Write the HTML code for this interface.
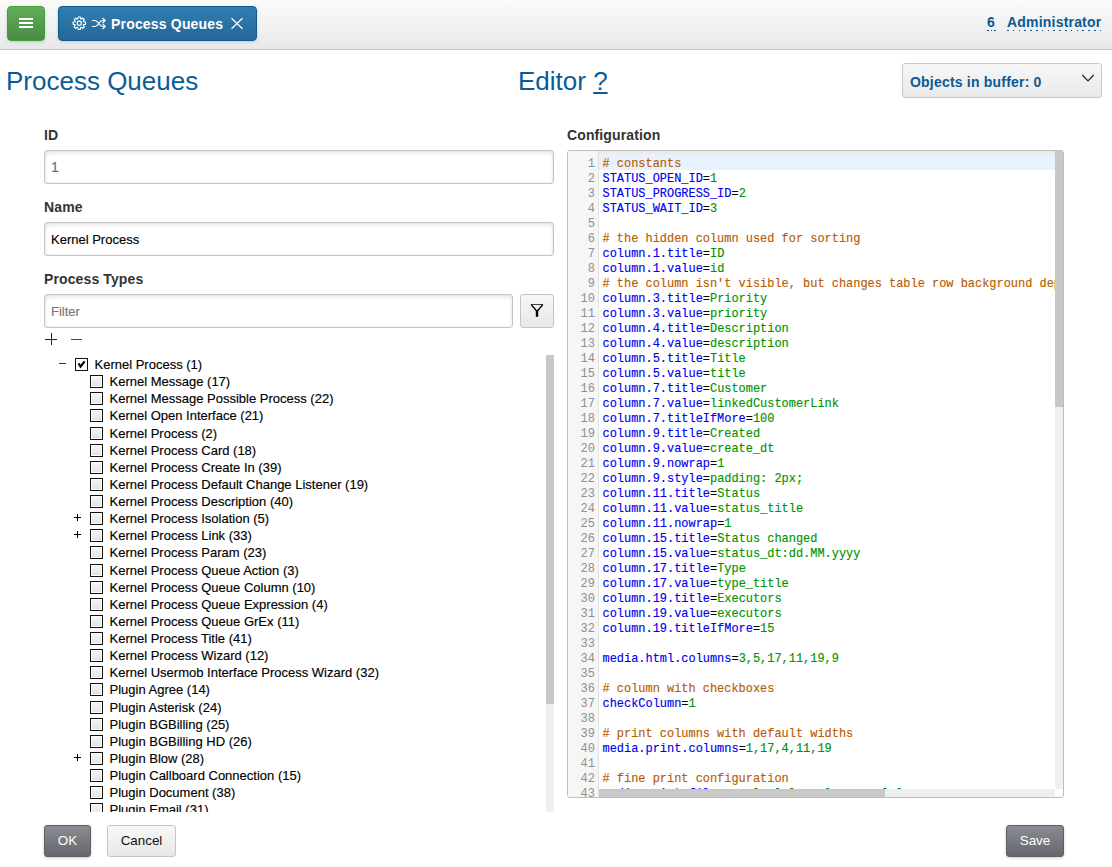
<!DOCTYPE html>
<html><head><meta charset="utf-8">
<style>
*{box-sizing:border-box}
html,body{margin:0;padding:0;background:#fff;width:1112px;height:867px;overflow:hidden;font-family:"Liberation Sans",sans-serif}
.a{position:absolute}
.hdr{left:0;top:0;width:1112px;height:50px;background:linear-gradient(#fbfbfb,#e8e8e8);border-bottom:1px solid #c4c4c4}
.gbtn{left:7px;top:6px;width:38px;height:35px;border:1px solid #40a034;border-radius:4px;background:linear-gradient(#62ad58,#4a8b45);box-shadow:0 1px 3px rgba(0,0,0,.15)}
.gbtn i{position:absolute;left:11px;width:14px;height:2px;background:#fff}
.tab{left:58px;top:6px;width:199px;height:35px;border:1px solid #0d5a90;border-radius:4px;background:linear-gradient(#2f7db2,#246898);box-shadow:0 1px 3px rgba(0,0,0,.15)}
.tabt{left:111px;top:16px;letter-spacing:0.18px;font-weight:bold;font-size:14px;color:#fff;line-height:16px;white-space:nowrap}
.lnk{font-weight:bold;font-size:14px;color:#0b5a94;line-height:16px;white-space:nowrap;letter-spacing:0.2px}
.dot{height:1px;background:repeating-linear-gradient(to right,#0b5a94 0 1.6px,transparent 1.6px 5.8px)}
.h1{font-size:26px;color:#0b5c96;line-height:30px;white-space:nowrap}
.dd{left:902px;top:63px;width:200px;height:35px;border:1px solid #c8c8c8;border-radius:3px;background:linear-gradient(#f7f7f7,#e9e9e9)}
.lbl{font-weight:bold;font-size:14px;color:#333;line-height:16px;white-space:nowrap;letter-spacing:0.12px}
.inp{border:1px solid #c4c4c4;border-radius:3px;background:#fff;box-shadow:inset 0 2px 4px rgba(0,0,0,.1),inset 0 0 3px rgba(0,0,0,.05)}
.itx{font-size:13px;line-height:16px;white-space:nowrap;-webkit-text-stroke:0.15px}
.fbtn{left:520px;top:294px;width:34px;height:34px;border:1px solid #c4c4c4;border-radius:3px;background:linear-gradient(#f6f6f6,#e8e8e8)}
.tree{left:44px;top:355px;width:510px;height:457px;overflow:hidden}
.tr{position:absolute;left:0;width:500px;height:17px}
.cb{position:absolute;top:0;width:13px;height:13px;border:1px solid #111;background:linear-gradient(#f6f6f6,#e2e2e2);box-shadow:inset 0 0 0 1px #fff}
.cb.ck{background:#fff;box-shadow:none}
.cb svg{position:absolute;left:0;top:0}
.tt{position:absolute;top:-1px;font-size:13px;line-height:15px;color:#000;white-space:nowrap;-webkit-text-stroke:0.15px}
.tg{position:absolute}
.tg.mi{top:5px;width:7px;height:1px;background:#333}
.tg.pl{top:1px;width:7px;height:9px}
.tg.pl:before{content:"";position:absolute;left:0;top:4px;width:7px;height:1px;background:#000}
.tg.pl:after{content:"";position:absolute;left:3px;top:1px;width:1px;height:7px;background:#000}
.vsb{left:502px;top:0;width:8px;height:457px;background:#efefef}
.vsb i{position:absolute;left:0;top:0;width:8px;height:349px;background:#c8c8c8}
.ed{left:567px;top:150px;width:497px;height:648px;border:1px solid #bdbdbd;border-radius:3px;overflow:hidden;background:#fff}
.gut{left:0;top:0;width:31px;height:646px;background:#f6f6f6;border-right:1px solid #e2e2e2;font-family:"Liberation Mono",monospace;font-size:12px;color:#8f8f8f;text-align:right}
.gn{height:15px;line-height:15px;padding-right:3px}
.code{left:31px;top:0;width:456px;height:638px;overflow:hidden;font-family:"Liberation Mono",monospace;font-size:11.95px;white-space:pre;-webkit-text-stroke:0.15px}
.cl{height:15px;line-height:15px;padding-left:3.5px}
.c{color:#b85c00}.k{color:#0000f0}.v{color:#009400}.o{color:#000}
.btn{height:32px;border-radius:3px;font-size:13.4px;line-height:30px;text-align:center;white-space:nowrap}
.dk{border:1px solid #5e6065;background:linear-gradient(#898c92,#65676c);color:#fff;box-shadow:0 1px 3px rgba(0,0,0,.2)}
.lt{border:1px solid #c6c6c6;background:linear-gradient(#f8f8f8,#e7e7e7);color:#111}
</style></head><body>
<div class="a hdr"></div>
<div class="a gbtn"><i style="top:11px"></i><i style="top:15px"></i><i style="top:19px"></i></div>
<div class="a tab"></div>
<svg class="a" style="left:0;top:0" width="260" height="50" viewBox="0 0 260 50">
<path d="M77.88 18.93 L78.23 16.99 L80.37 16.99 L80.72 18.93 L81.32 19.18 L82.94 18.06 L84.44 19.56 L83.32 21.18 L83.57 21.78 L85.51 22.13 L85.51 24.27 L83.57 24.62 L83.32 25.22 L84.44 26.84 L82.94 28.34 L81.32 27.22 L80.72 27.47 L80.37 29.41 L78.23 29.41 L77.88 27.47 L77.28 27.22 L75.66 28.34 L74.16 26.84 L75.28 25.22 L75.03 24.62 L73.09 24.27 L73.09 22.13 L75.03 21.78 L75.28 21.18 L74.16 19.56 L75.66 18.06 L77.28 19.18Z" fill="none" stroke="#fff" stroke-width="1.15" stroke-linejoin="round"/>
<circle cx="79.3" cy="23.2" r="2.1" fill="none" stroke="#fff" stroke-width="1.2"/>
<path d="M92 20.5 H95 C98.5 20.5 99 26.5 102.5 26.5 H105.2 M92 26.5 H95 C98.5 26.5 99 20.5 102.5 20.5 H105.2 M102.6 18 L105.2 20.5 L102.6 23 M102.6 24 L105.2 26.5 L102.6 29" fill="none" stroke="#fff" stroke-width="1.2"/>
<path d="M231.5 18.2 L242.5 28.8 M242.5 18.2 L231.5 28.8" stroke="#fff" stroke-width="1.2"/>
</svg>
<div class="a tabt">Process Queues</div>
<div class="a lnk" style="left:987px;top:14px">6</div><div class="a dot" style="left:987px;top:30px;width:9px;background:repeating-linear-gradient(to right,#0b5a94 0 1.5px,transparent 1.5px 3.5px)"></div>
<div class="a lnk" style="left:1007px;top:14px">Administrator</div><div class="a dot" style="left:1007px;top:30px;width:95px"></div>

<div class="a h1" style="left:6px;top:66px">Process Queues</div>
<div class="a h1" style="left:518px;top:66px">Editor <span style="text-decoration:underline">?</span></div>
<div class="a dd"></div>
<div class="a lnk" style="left:910px;top:74px">Objects in buffer: 0</div>
<svg class="a" style="left:1080px;top:73px" width="16" height="10" viewBox="0 0 16 10"><path d="M2.3 2 L8 7.8 L13.7 2" fill="none" stroke="#222" stroke-width="1.2"/></svg>

<div class="a lbl" style="left:44px;top:127px">ID</div>
<div class="a inp" style="left:44px;top:150px;width:510px;height:34px"></div>
<div class="a itx" style="left:51px;top:159px;color:#707070;font-size:14px">1</div>
<div class="a lbl" style="left:44px;top:199px">Name</div>
<div class="a inp" style="left:44px;top:222px;width:510px;height:34px"></div>
<div class="a itx" style="left:51px;top:232px;color:#000">Kernel Process</div>
<div class="a lbl" style="left:44px;top:271px">Process Types</div>
<div class="a inp" style="left:44px;top:294px;width:469px;height:34px"></div>
<div class="a itx" style="left:51px;top:304px;color:#777">Filter</div>
<div class="a fbtn"></div><svg class="a" style="left:520px;top:294px" width="34" height="34" viewBox="0 0 34 34"><path d="M11 10.5 H23" stroke="#444" stroke-width="1"/><path d="M11.2 10.6 L16.5 16.8 M22.8 10.6 L17.5 16.8" stroke="#000" stroke-width="1.4" fill="none"/><rect x="15.8" y="16.2" width="2.4" height="6.6" fill="#000"/></svg>
<div class="a" style="left:45px;top:339px;width:12px;height:1px;background:#222"></div>
<div class="a" style="left:50.5px;top:333px;width:1px;height:12px;background:#222"></div>
<div class="a" style="left:71px;top:339px;width:11px;height:1px;background:#444"></div>

<div class="a tree">
<div class="tr" style="top:3.0px"><span class="tg mi" style="left:15px"></span><span class="cb ck" style="left:31px"><svg width="11" height="11" viewBox="0 0 11 11"><path d="M2.6 4.4 L4.6 7.6 L8.6 2.4" fill="none" stroke="#000" stroke-width="2.2"/></svg></span><span class="tt" style="left:50.5px">Kernel Process (1)</span></div>
<div class="tr" style="top:20.120000000000005px"><span class="cb" style="left:46px"></span><span class="tt" style="left:65.5px">Kernel Message (17)</span></div>
<div class="tr" style="top:37.25px"><span class="cb" style="left:46px"></span><span class="tt" style="left:65.5px">Kernel Message Possible Process (22)</span></div>
<div class="tr" style="top:54.379999999999995px"><span class="cb" style="left:46px"></span><span class="tt" style="left:65.5px">Kernel Open Interface (21)</span></div>
<div class="tr" style="top:71.5px"><span class="cb" style="left:46px"></span><span class="tt" style="left:65.5px">Kernel Process (2)</span></div>
<div class="tr" style="top:88.62px"><span class="cb" style="left:46px"></span><span class="tt" style="left:65.5px">Kernel Process Card (18)</span></div>
<div class="tr" style="top:105.75px"><span class="cb" style="left:46px"></span><span class="tt" style="left:65.5px">Kernel Process Create In (39)</span></div>
<div class="tr" style="top:122.88px"><span class="cb" style="left:46px"></span><span class="tt" style="left:65.5px">Kernel Process Default Change Listener (19)</span></div>
<div class="tr" style="top:140.0px"><span class="cb" style="left:46px"></span><span class="tt" style="left:65.5px">Kernel Process Description (40)</span></div>
<div class="tr" style="top:157.12px"><span class="tg pl" style="left:30px"></span><span class="cb" style="left:46px"></span><span class="tt" style="left:65.5px">Kernel Process Isolation (5)</span></div>
<div class="tr" style="top:174.25px"><span class="tg pl" style="left:30px"></span><span class="cb" style="left:46px"></span><span class="tt" style="left:65.5px">Kernel Process Link (33)</span></div>
<div class="tr" style="top:191.38px"><span class="cb" style="left:46px"></span><span class="tt" style="left:65.5px">Kernel Process Param (23)</span></div>
<div class="tr" style="top:208.5px"><span class="cb" style="left:46px"></span><span class="tt" style="left:65.5px">Kernel Process Queue Action (3)</span></div>
<div class="tr" style="top:225.62px"><span class="cb" style="left:46px"></span><span class="tt" style="left:65.5px">Kernel Process Queue Column (10)</span></div>
<div class="tr" style="top:242.75px"><span class="cb" style="left:46px"></span><span class="tt" style="left:65.5px">Kernel Process Queue Expression (4)</span></div>
<div class="tr" style="top:259.88px"><span class="cb" style="left:46px"></span><span class="tt" style="left:65.5px">Kernel Process Queue GrEx (11)</span></div>
<div class="tr" style="top:277.0px"><span class="cb" style="left:46px"></span><span class="tt" style="left:65.5px">Kernel Process Title (41)</span></div>
<div class="tr" style="top:294.12px"><span class="cb" style="left:46px"></span><span class="tt" style="left:65.5px">Kernel Process Wizard (12)</span></div>
<div class="tr" style="top:311.25px"><span class="cb" style="left:46px"></span><span class="tt" style="left:65.5px">Kernel Usermob Interface Process Wizard (32)</span></div>
<div class="tr" style="top:328.38px"><span class="cb" style="left:46px"></span><span class="tt" style="left:65.5px">Plugin Agree (14)</span></div>
<div class="tr" style="top:345.5px"><span class="cb" style="left:46px"></span><span class="tt" style="left:65.5px">Plugin Asterisk (24)</span></div>
<div class="tr" style="top:362.62px"><span class="cb" style="left:46px"></span><span class="tt" style="left:65.5px">Plugin BGBilling (25)</span></div>
<div class="tr" style="top:379.75px"><span class="cb" style="left:46px"></span><span class="tt" style="left:65.5px">Plugin BGBilling HD (26)</span></div>
<div class="tr" style="top:396.88px"><span class="tg pl" style="left:30px"></span><span class="cb" style="left:46px"></span><span class="tt" style="left:65.5px">Plugin Blow (28)</span></div>
<div class="tr" style="top:414.0px"><span class="cb" style="left:46px"></span><span class="tt" style="left:65.5px">Plugin Callboard Connection (15)</span></div>
<div class="tr" style="top:431.12px"><span class="cb" style="left:46px"></span><span class="tt" style="left:65.5px">Plugin Document (38)</span></div>
<div class="tr" style="top:448.25px"><span class="cb" style="left:46px"></span><span class="tt" style="left:65.5px">Plugin Email (31)</span></div>
<div class="tr" style="top:465.38px"><span class="cb" style="left:46px"></span><span class="tt" style="left:65.5px">Plugin Fulltext (27)</span></div>
<div class="a vsb"><i></i></div>
</div>

<div class="a lbl" style="left:567px;top:127px">Configuration</div>
<div class="a ed">
<div class="a gut" style="padding-top:6px"><div class="gn">1</div><div class="gn">2</div><div class="gn">3</div><div class="gn">4</div><div class="gn">5</div><div class="gn">6</div><div class="gn">7</div><div class="gn">8</div><div class="gn">9</div><div class="gn">10</div><div class="gn">11</div><div class="gn">12</div><div class="gn">13</div><div class="gn">14</div><div class="gn">15</div><div class="gn">16</div><div class="gn">17</div><div class="gn">18</div><div class="gn">19</div><div class="gn">20</div><div class="gn">21</div><div class="gn">22</div><div class="gn">23</div><div class="gn">24</div><div class="gn">25</div><div class="gn">26</div><div class="gn">27</div><div class="gn">28</div><div class="gn">29</div><div class="gn">30</div><div class="gn">31</div><div class="gn">32</div><div class="gn">33</div><div class="gn">34</div><div class="gn">35</div><div class="gn">36</div><div class="gn">37</div><div class="gn">38</div><div class="gn">39</div><div class="gn">40</div><div class="gn">41</div><div class="gn">42</div><div class="gn">43</div></div>
<div class="a" style="left:31px;top:0;width:456px;height:4px;background:linear-gradient(#e9e9e9,#efefef)"></div>
<div class="a" style="left:31px;top:4px;width:456px;height:15px;background:#e8f2fe"></div>
<div class="a code" style="padding-top:6px"><div class="cl"><span class="c"># constants</span></div><div class="cl"><span class="k">STATUS_OPEN_ID</span><span class="o">=</span><span class="v">1</span></div><div class="cl"><span class="k">STATUS_PROGRESS_ID</span><span class="o">=</span><span class="v">2</span></div><div class="cl"><span class="k">STATUS_WAIT_ID</span><span class="o">=</span><span class="v">3</span></div><div class="cl">&#8203;</div><div class="cl"><span class="c"># the hidden column used for sorting</span></div><div class="cl"><span class="k">column.1.title</span><span class="o">=</span><span class="v">ID</span></div><div class="cl"><span class="k">column.1.value</span><span class="o">=</span><span class="v">id</span></div><div class="cl"><span class="c"># the column isn't visible, but changes table row background depending on priority</span></div><div class="cl"><span class="k">column.3.title</span><span class="o">=</span><span class="v">Priority</span></div><div class="cl"><span class="k">column.3.value</span><span class="o">=</span><span class="v">priority</span></div><div class="cl"><span class="k">column.4.title</span><span class="o">=</span><span class="v">Description</span></div><div class="cl"><span class="k">column.4.value</span><span class="o">=</span><span class="v">description</span></div><div class="cl"><span class="k">column.5.title</span><span class="o">=</span><span class="v">Title</span></div><div class="cl"><span class="k">column.5.value</span><span class="o">=</span><span class="v">title</span></div><div class="cl"><span class="k">column.7.title</span><span class="o">=</span><span class="v">Customer</span></div><div class="cl"><span class="k">column.7.value</span><span class="o">=</span><span class="v">linkedCustomerLink</span></div><div class="cl"><span class="k">column.7.titleIfMore</span><span class="o">=</span><span class="v">100</span></div><div class="cl"><span class="k">column.9.title</span><span class="o">=</span><span class="v">Created</span></div><div class="cl"><span class="k">column.9.value</span><span class="o">=</span><span class="v">create_dt</span></div><div class="cl"><span class="k">column.9.nowrap</span><span class="o">=</span><span class="v">1</span></div><div class="cl"><span class="k">column.9.style</span><span class="o">=</span><span class="v">padding: 2px;</span></div><div class="cl"><span class="k">column.11.title</span><span class="o">=</span><span class="v">Status</span></div><div class="cl"><span class="k">column.11.value</span><span class="o">=</span><span class="v">status_title</span></div><div class="cl"><span class="k">column.11.nowrap</span><span class="o">=</span><span class="v">1</span></div><div class="cl"><span class="k">column.15.title</span><span class="o">=</span><span class="v">Status changed</span></div><div class="cl"><span class="k">column.15.value</span><span class="o">=</span><span class="v">status_dt:dd.MM.yyyy</span></div><div class="cl"><span class="k">column.17.title</span><span class="o">=</span><span class="v">Type</span></div><div class="cl"><span class="k">column.17.value</span><span class="o">=</span><span class="v">type_title</span></div><div class="cl"><span class="k">column.19.title</span><span class="o">=</span><span class="v">Executors</span></div><div class="cl"><span class="k">column.19.value</span><span class="o">=</span><span class="v">executors</span></div><div class="cl"><span class="k">column.19.titleIfMore</span><span class="o">=</span><span class="v">15</span></div><div class="cl">&#8203;</div><div class="cl"><span class="k">media.html.columns</span><span class="o">=</span><span class="v">3,5,17,11,19,9</span></div><div class="cl">&#8203;</div><div class="cl"><span class="c"># column with checkboxes</span></div><div class="cl"><span class="k">checkColumn</span><span class="o">=</span><span class="v">1</span></div><div class="cl">&#8203;</div><div class="cl"><span class="c"># print columns with default widths</span></div><div class="cl"><span class="k">media.print.columns</span><span class="o">=</span><span class="v">1,17,4,11,19</span></div><div class="cl">&#8203;</div><div class="cl"><span class="c"># fine print configuration</span></div><div class="cl"><span class="k">media.print.filename</span><span class="o">=</span><span class="v">leslalersalnosaerslnl</span></div></div>
<div class="a" style="left:487px;top:0;width:8px;height:638px;background:#efefef"><i class="a" style="left:0;top:0;width:8px;height:256px;background:#c8c8c8"></i></div>
<div class="a" style="left:31px;top:638px;width:456px;height:8px;background:#efefef"><i class="a" style="left:0;top:0;width:286px;height:8px;background:#c8c8c8"></i></div>
</div>

<div class="a btn dk" style="left:44px;top:825px;width:47px">OK</div>
<div class="a btn lt" style="left:107px;top:825px;width:69px">Cancel</div>
<div class="a btn dk" style="left:1006px;top:825px;width:58px">Save</div>
</body></html>
